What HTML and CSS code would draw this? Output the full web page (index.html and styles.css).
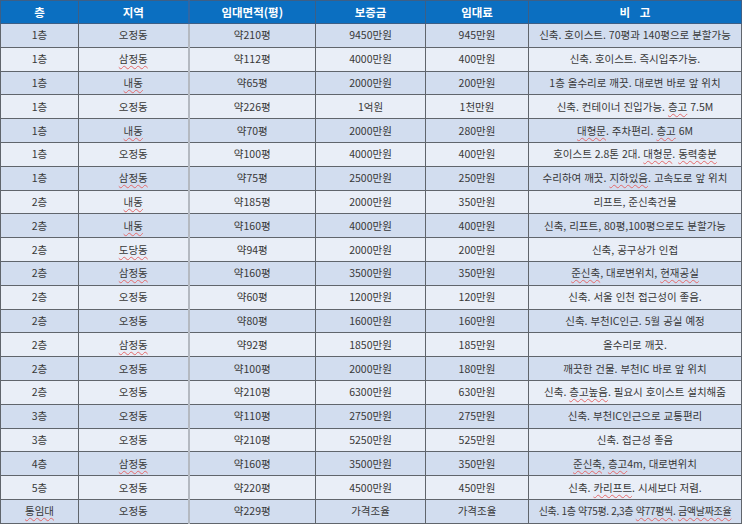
FILE: index.html
```html
<!DOCTYPE html>
<html lang="ko">
<head>
<meta charset="utf-8">
<link rel="stylesheet" href="styles.css">
</head>
<body>
<table class="list">
<colgroup>
<col class="c1"><col class="c2"><col class="c3"><col class="c4"><col class="c5"><col class="c6">
</colgroup>
<thead>
<tr><th>층</th><th>지역</th><th class="sep">임대면적(평)</th><th>보증금</th><th>임대료</th><th>비&nbsp;&nbsp;&nbsp;고</th></tr>
</thead>
<tbody>
<tr><td>1층</td><td>오정동</td><td class="sep">약210평</td><td>9450만원</td><td>945만원</td><td>신축. 호이스트. 70평과 140평으로 분할가능</td></tr>
<tr><td>1층</td><td><span class="sp">삼정동</span></td><td class="sep">약112평</td><td>4000만원</td><td>400만원</td><td>신축. 호이스트. 즉시입주가능.</td></tr>
<tr><td>1층</td><td><span class="sp">내동</span></td><td class="sep">약65평</td><td>2000만원</td><td>200만원</td><td>1층 올수리로 깨끗. 대로변 바로 앞 위치</td></tr>
<tr><td>1층</td><td>오정동</td><td class="sep">약226평</td><td>1억원</td><td>1천만원</td><td>신축. 컨테이너 진입가능. <span class="sp">층고</span> 7.5M</td></tr>
<tr><td>1층</td><td><span class="sp">내동</span></td><td class="sep">약70평</td><td>2000만원</td><td>280만원</td><td><span class="sp">대형문</span>. 주차편리. <span class="sp">층고</span> 6M</td></tr>
<tr><td>1층</td><td>오정동</td><td class="sep">약100평</td><td>4000만원</td><td>400만원</td><td>호이스트 2.8톤 2대. <span class="sp">대형문</span>. <span class="sp">동력충분</span></td></tr>
<tr><td>1층</td><td><span class="sp">삼정동</span></td><td class="sep">약75평</td><td>2500만원</td><td>250만원</td><td>수리하여 깨끗. <span class="sp">지하있음</span>. 고속도로 앞 위치</td></tr>
<tr><td>2층</td><td><span class="sp">내동</span></td><td class="sep">약185평</td><td>2000만원</td><td>350만원</td><td>리프트, 준신축건물</td></tr>
<tr><td>2층</td><td><span class="sp">내동</span></td><td class="sep">약160평</td><td>4000만원</td><td>400만원</td><td>신축, 리프트, 80평,100평으로도 분할가능</td></tr>
<tr><td>2층</td><td><span class="sp">도당동</span></td><td class="sep">약94평</td><td>2000만원</td><td>200만원</td><td>신축, 공구상가 인접</td></tr>
<tr><td>2층</td><td><span class="sp">삼정동</span></td><td class="sep">약160평</td><td>3500만원</td><td>350만원</td><td><span class="sp">준신축</span>, 대로변위치, <span class="sp">현재공실</span></td></tr>
<tr><td>2층</td><td>오정동</td><td class="sep">약60평</td><td>1200만원</td><td>120만원</td><td>신축. 서울 인천 접근성이 좋음.</td></tr>
<tr><td>2층</td><td>오정동</td><td class="sep">약80평</td><td>1600만원</td><td>160만원</td><td>신축. 부천IC인근. 5월 공실 예정</td></tr>
<tr><td>2층</td><td><span class="sp">삼정동</span></td><td class="sep">약92평</td><td>1850만원</td><td>185만원</td><td>올수리로 깨끗.</td></tr>
<tr><td>2층</td><td>오정동</td><td class="sep">약100평</td><td>2000만원</td><td>180만원</td><td>깨끗한 건물. 부천IC 바로 앞 위치</td></tr>
<tr><td>2층</td><td>오정동</td><td class="sep">약210평</td><td>6300만원</td><td>630만원</td><td>신축. <span class="sp">층고높음</span>. 필요시 호이스트 설치해줌</td></tr>
<tr><td>3층</td><td>오정동</td><td class="sep">약110평</td><td>2750만원</td><td>275만원</td><td>신축. 부천IC인근으로 교통편리</td></tr>
<tr><td>3층</td><td>오정동</td><td class="sep">약210평</td><td>5250만원</td><td>525만원</td><td>신축. 접근성 좋음</td></tr>
<tr><td>4층</td><td><span class="sp">삼정동</span></td><td class="sep">약160평</td><td>3500만원</td><td>350만원</td><td><span class="sp">준신축</span>, <span class="sp">층고</span>4m, 대로변위치</td></tr>
<tr><td>5층</td><td>오정동</td><td class="sep">약220평</td><td>4500만원</td><td>450만원</td><td>신축. <span class="sp">카리프트</span>. 시세보다 저렴.</td></tr>
<tr><td><span class="sp">통임대</span></td><td>오정동</td><td class="sep">약229평</td><td>가격조율</td><td>가격조율</td><td class="tight">신축. 1층 약75평. 2,3층 <span class="sp">약77평씩</span>. <span class="sp">금액날짜조율</span></td></tr>
</tbody>
</table>
</body>
</html>
```
FILE: styles.css
```css
html, body {
  margin: 0;
  padding: 0;
  background: #ffffff;
}
body {
  font-family: "Noto Sans CJK KR", "Noto Sans", sans-serif;
  color: #383838;
}
.list {
  border-collapse: collapse;
  table-layout: fixed;
  width: 741px;
  border: 1px solid #555a60;
}
.c1 { width: 78px; }
.c2 { width: 110px; }
.c3 { width: 127px; }
.c4 { width: 110px; }
.c5 { width: 103px; }
.c6 { width: 213px; }
.list th {
  background: #0b6fc1;
  color: #ffffff;
  font-size: 11.5px;
  font-weight: bold;
  height: 22px;
  padding: 0;
  border: 1px solid #3d5f86;
  text-align: center;
  line-height: 22px;
}
.list td {
  font-size: 10.5px;
  height: 22.8px;
  padding: 0;
  text-align: center;
  border: 1px solid #60656c;
  line-height: 14px;
  white-space: nowrap;
  overflow: hidden;
}
.list tbody tr:nth-child(odd) td { background: #d2ddef; }
.list tbody tr:nth-child(even) td { background: #e9eef7; }
.list .sep { border-left: 2px solid #b4b9c1; }
.list th.sep { border-left: 2px solid #2f67a5; }
.tight { letter-spacing: -0.3px; font-size: 10px !important; }
.sp {
  text-decoration: underline wavy #e46a6a;
  text-decoration-thickness: 0.7px;
  text-underline-offset: 1.5px;
}
```
